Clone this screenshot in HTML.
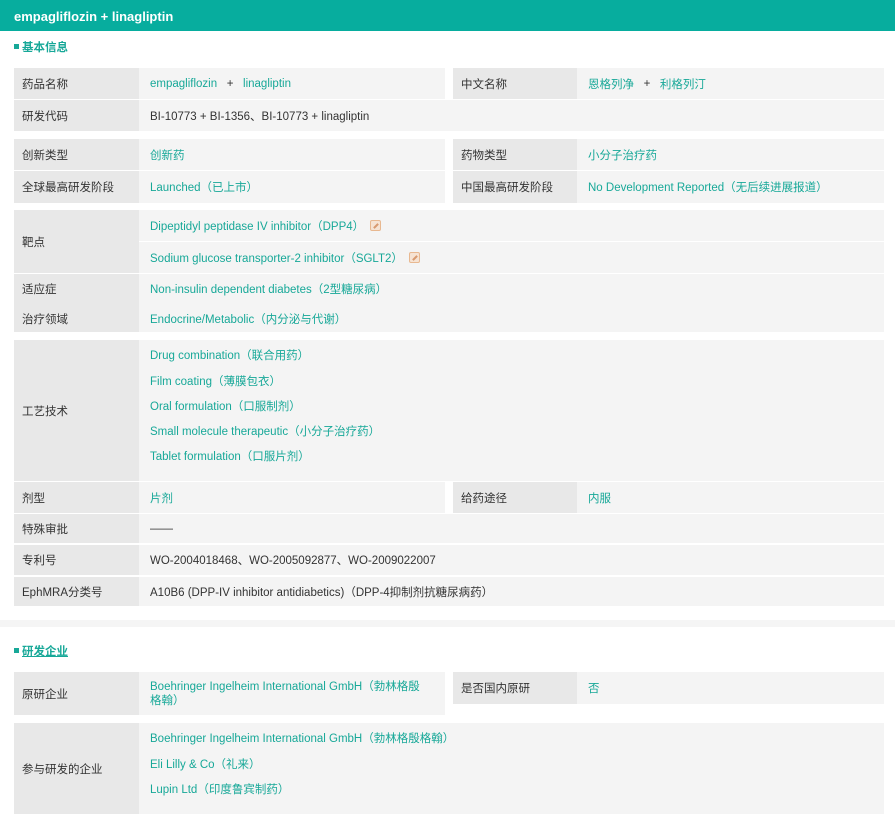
<!DOCTYPE html>
<html><head><meta charset="utf-8">
<style>
*{margin:0;padding:0;box-sizing:border-box}
body{width:895px;height:824px;background:#fff;position:relative;overflow:hidden;font-family:"Liberation Sans","Noto Sans CJK SC",sans-serif;font-size:11.5px;color:#333}
.a{position:absolute}
.L{position:absolute;background:#e8e8e8;padding-left:8px;display:flex;align-items:center}
.V{position:absolute;background:#f4f4f4;padding-left:11px;display:flex;align-items:center}
.t{color:#17a898}
.hd{position:absolute;left:0;top:0;width:895px;height:31px;background:#07ad9e;color:#fff;font-weight:bold;font-size:13px;padding-left:14px;line-height:33px}
.sec{position:absolute;left:14px;color:#17a898;font-weight:bold;font-size:11.5px}
.sec:before{content:"";display:inline-block;width:5px;height:5px;background:#17a898;margin-right:3px;vertical-align:2px}
.ic{display:inline-block;width:11px;height:11px;border:1px solid #e8b890;background:#f6e3d3;border-radius:2px;margin-left:6px;vertical-align:-1px;position:relative}
.ic:after{content:"";position:absolute;left:2px;top:4px;width:6px;height:2px;background:#d89a70;transform:rotate(-45deg)}
</style></head><body>
<div class="hd">empagliflozin + linagliptin</div>
<div class="sec" style="top:39px">基本信息</div>

<div class="L" style="left:14px;top:68px;width:125px;height:31px">药品名称</div>
<div class="V" style="left:139px;top:68px;width:306px;height:31px"><span class="t">empagliflozin</span>&nbsp;&nbsp;&nbsp;+&nbsp;&nbsp;&nbsp;<span class="t">linagliptin</span></div>
<div class="L" style="left:453px;top:68px;width:124px;height:31px">中文名称</div>
<div class="V" style="left:577px;top:68px;width:307px;height:31px"><span class="t">恩格列净</span>&nbsp;&nbsp;&nbsp;+&nbsp;&nbsp;&nbsp;<span class="t">利格列汀</span></div>
<div class="L" style="left:14px;top:100px;width:125px;height:31px">研发代码</div>
<div class="V" style="left:139px;top:100px;width:745px;height:31px">BI-10773 + BI-1356、BI-10773 + linagliptin</div>

<div class="L" style="left:14px;top:139px;width:125px;height:31px">创新类型</div>
<div class="V" style="left:139px;top:139px;width:306px;height:31px"><span class="t">创新药</span></div>
<div class="L" style="left:453px;top:139px;width:124px;height:31px">药物类型</div>
<div class="V" style="left:577px;top:139px;width:307px;height:31px"><span class="t">小分子治疗药</span></div>
<div class="L" style="left:14px;top:171px;width:125px;height:32px">全球最高研发阶段</div>
<div class="V" style="left:139px;top:171px;width:306px;height:32px"><span class="t">Launched（已上市）</span></div>
<div class="L" style="left:453px;top:171px;width:124px;height:32px">中国最高研发阶段</div>
<div class="V" style="left:577px;top:171px;width:307px;height:32px"><span class="t">No Development Reported（无后续进展报道）</span></div>

<div class="L" style="left:14px;top:210px;width:125px;height:63px">靶点</div>
<div class="V" style="left:139px;top:210px;width:745px;height:31px"><span class="t">Dipeptidyl peptidase IV inhibitor（DPP4）</span><span class="ic"></span></div>
<div class="V" style="left:139px;top:242px;width:745px;height:31px"><span class="t">Sodium glucose transporter-2 inhibitor（SGLT2）</span><span class="ic"></span></div>

<div class="L" style="left:14px;top:274px;width:125px;height:58px"></div>
<div class="V" style="left:139px;top:274px;width:745px;height:58px"></div>
<div class="a" style="left:22px;top:281px">适应症</div>
<div class="a t" style="left:150px;top:281px">Non-insulin dependent diabetes（2型糖尿病）</div>
<div class="a" style="left:22px;top:311px">治疗领域</div>
<div class="a t" style="left:150px;top:311px">Endocrine/Metabolic（内分泌与代谢）</div>

<div class="L" style="left:14px;top:340px;width:125px;height:141px">工艺技术</div>
<div class="V" style="left:139px;top:340px;width:745px;height:141px"></div>
<div class="a t" style="left:150px;top:347px">Drug combination（联合用药）</div>
<div class="a t" style="left:150px;top:373px">Film coating（薄膜包衣）</div>
<div class="a t" style="left:150px;top:398px">Oral formulation（口服制剂）</div>
<div class="a t" style="left:150px;top:423px">Small molecule therapeutic（小分子治疗药）</div>
<div class="a t" style="left:150px;top:448px">Tablet formulation（口服片剂）</div>

<div class="L" style="left:14px;top:482px;width:125px;height:31px">剂型</div>
<div class="V" style="left:139px;top:482px;width:306px;height:31px"><span class="t">片剂</span></div>
<div class="L" style="left:453px;top:482px;width:124px;height:31px">给药途径</div>
<div class="V" style="left:577px;top:482px;width:307px;height:31px"><span class="t">内服</span></div>
<div class="L" style="left:14px;top:514px;width:125px;height:29px">特殊审批</div>
<div class="V" style="left:139px;top:514px;width:745px;height:29px">——</div>
<div class="L" style="left:14px;top:545px;width:125px;height:30px">专利号</div>
<div class="V" style="left:139px;top:545px;width:745px;height:30px">WO-2004018468、WO-2005092877、WO-2009022007</div>
<div class="L" style="left:14px;top:577px;width:125px;height:29px">EphMRA分类号</div>
<div class="V" style="left:139px;top:577px;width:745px;height:29px">A10B6 (DPP-IV inhibitor antidiabetics)（DPP-4抑制剂抗糖尿病药）</div>

<div class="a" style="left:0;top:620px;width:895px;height:7px;background:#f5f5f5"></div>
<div class="sec" style="top:643px;text-decoration:underline">研发企业</div>

<div class="L" style="left:14px;top:672px;width:125px;height:43px">原研企业</div>
<div class="V" style="left:139px;top:672px;width:306px;height:43px;line-height:14px;padding-right:14px"><span class="t">Boehringer Ingelheim International GmbH（勃林格殷格翰）</span></div>
<div class="L" style="left:453px;top:672px;width:124px;height:32px">是否国内原研</div>
<div class="V" style="left:577px;top:672px;width:307px;height:32px"><span class="t">否</span></div>

<div class="L" style="left:14px;top:723px;width:125px;height:91px">参与研发的企业</div>
<div class="V" style="left:139px;top:723px;width:745px;height:91px"></div>
<div class="a t" style="left:150px;top:730px">Boehringer Ingelheim International GmbH（勃林格殷格翰）</div>
<div class="a t" style="left:150px;top:756px">Eli Lilly &amp; Co（礼来）</div>
<div class="a t" style="left:150px;top:781px">Lupin Ltd（印度鲁宾制药）</div>
</body></html>
